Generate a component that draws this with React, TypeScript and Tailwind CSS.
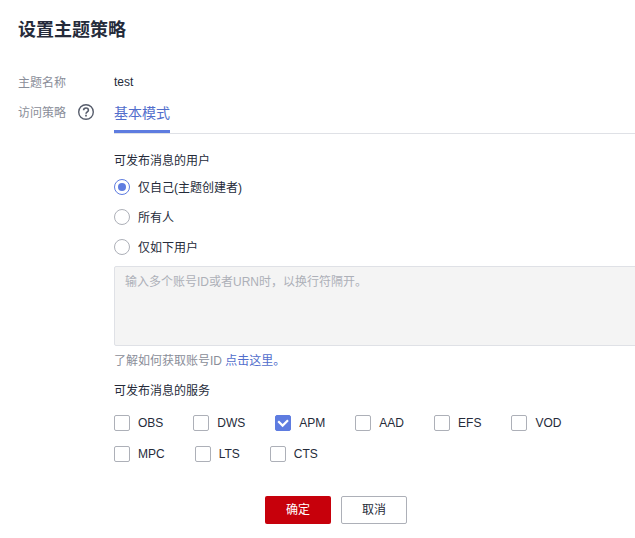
import type { ReactNode } from "react";

const USERS = ["仅自己(主题创建者)", "所有人", "仅如下用户"];

const SERVICE_ROWS = [
  ["OBS", "DWS", "APM", "AAD", "EFS", "VOD"],
  ["MPC", "LTS", "CTS"],
];

function Radio({ checked, children }: { checked: boolean; children: ReactNode }) {
  return (
    <label className="flex h-[30px] items-center gap-2">
      <span
        className={`flex h-4 w-4 items-center justify-center rounded-full border bg-white ${
          checked ? "border-[#5e7ce0]" : "border-[#adb0b8]"
        }`}
      >
        {checked && <span className="h-2 w-2 rounded-full bg-[#5e7ce0]" />}
      </span>
      <span className="pt-px">{children}</span>
    </label>
  );
}

function Checkbox({ checked, children }: { checked: boolean; children: ReactNode }) {
  return (
    <label className="flex h-4 items-center gap-2">
      <span
        className={`flex h-4 w-4 items-center justify-center rounded-[2px] border ${
          checked ? "border-[#5e7ce0] bg-[#5e7ce0]" : "border-[#adb0b8] bg-white"
        }`}
      >
        {checked && (
          <svg className="h-4 w-4 shrink-0" viewBox="0 0 16 16" fill="none" stroke="#fff" strokeWidth="2.2">
            <path d="M3.2 6.2 7.6 10.6 13 5.2" />
          </svg>
        )}
      </span>
      <span>{children}</span>
    </label>
  );
}

function HelpIcon() {
  return (
    <svg className="h-4 w-4" viewBox="0 0 16 16" fill="none" stroke="#575d6c">
      <circle cx="8" cy="8" r="7.3" strokeWidth="1.4" />
      <path d="M5.6 6.3C5.6 4.8 6.7 4 8 4s2.4.8 2.4 2.2c0 1.7-2.4 1.7-2.4 3.6" strokeWidth="1.6" />
      <path d="M8 10.8v1.7" strokeWidth="1.7" />
    </svg>
  );
}

export default function App() {
  return (
    <div className="h-[538px] w-full overflow-hidden bg-white pl-[18px] font-['Liberation_Sans','Noto_Sans_CJK_SC',sans-serif] text-xs leading-4 text-[#252b3a]">
      <h1 className="pt-[18px] text-lg leading-6 font-bold">设置主题策略</h1>

      <div className="mt-8 flex h-4">
        <span className="w-24 pt-px text-[#8a8e99]">主题名称</span>
        <span>test</span>
      </div>

      <div className="mt-[14px] flex">
        <div className="flex h-4 w-24 items-center gap-3 text-[#8a8e99]">
          <span className="pt-px">访问策略</span>
          <HelpIcon />
        </div>

        <div className="min-w-0 flex-1">
          <div className="flex h-[30px] border-b border-[#dfe1e6]">
            <div className="-mb-px h-[29px] border-b-[3px] border-[#5e7ce0] pt-px text-sm leading-4 text-[#526ecc]">
              基本模式
            </div>
          </div>

          <p className="mt-[19px]">可发布消息的用户</p>
          <div className="mt-[3px]">
            {USERS.map((user, i) => (
              <Radio key={user} checked={i === 0}>
                {user}
              </Radio>
            ))}
          </div>

          <textarea
            className="mt-[4px] -mr-1 block h-20 w-[calc(100%+4px)] resize-none rounded-[2px] border border-[#dfe1e6] bg-[#f4f4f4] px-[10px] py-[7px] placeholder:text-[#adb0b8]"
            placeholder="输入多个账号ID或者URN时，以换行符隔开。"
            disabled
          />
          <p className="mt-[7px] text-[#8a8e99]">
            了解如何获取账号ID <a className="text-[#526ecc]">点击这里。</a>
          </p>

          <p className="mt-[14px]">可发布消息的服务</p>
          <div className="mt-4 flex flex-col gap-[15px]">
            {SERVICE_ROWS.map((row) => (
              <div key={row[0]} className="flex gap-[30px]">
                {row.map((name) => (
                  <Checkbox key={name} checked={name === "APM"}>
                    {name}
                  </Checkbox>
                ))}
              </div>
            ))}
          </div>
        </div>
      </div>

      <div className="mt-[34px] ml-[247px] flex gap-[10px]">
        <button className="h-7 w-[66px] rounded-[2px] bg-[#c7000b] text-white">确定</button>
        <button className="h-7 w-[66px] rounded-[2px] border border-[#adb0b8] bg-white">取消</button>
      </div>
    </div>
  );
}
